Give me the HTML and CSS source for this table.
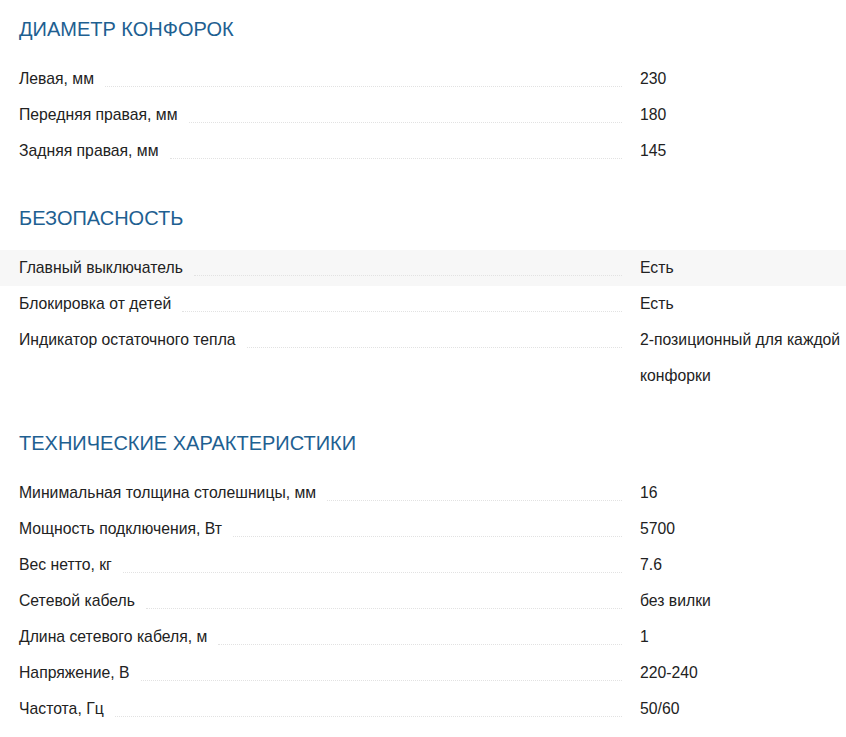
FILE: index.html
```html
<!DOCTYPE html>
<html lang="ru">
<head>
<meta charset="utf-8">
<title>Характеристики</title>
<link rel="stylesheet" href="styles.css">
</head>
<body>
<div class="specs">
  <section class="group">
    <h2 class="group-title">ДИАМЕТР КОНФОРОК</h2>
    <div class="row"><div class="label"><span>Левая, мм</span><i class="leader"></i></div><div class="value">230</div></div>
    <div class="row"><div class="label"><span>Передняя правая, мм</span><i class="leader"></i></div><div class="value">180</div></div>
    <div class="row"><div class="label"><span>Задняя правая, мм</span><i class="leader"></i></div><div class="value">145</div></div>
  </section>
  <section class="group">
    <h2 class="group-title">БЕЗОПАСНОСТЬ</h2>
    <div class="row row-hl"><div class="label"><span>Главный выключатель</span><i class="leader"></i></div><div class="value">Есть</div></div>
    <div class="row"><div class="label"><span>Блокировка от детей</span><i class="leader"></i></div><div class="value">Есть</div></div>
    <div class="row"><div class="label"><span>Индикатор остаточного тепла</span><i class="leader"></i></div><div class="value">2-позиционный для каждой конфорки</div></div>
  </section>
  <section class="group">
    <h2 class="group-title">ТЕХНИЧЕСКИЕ ХАРАКТЕРИСТИКИ</h2>
    <div class="row"><div class="label"><span>Минимальная толщина столешницы, мм</span><i class="leader"></i></div><div class="value">16</div></div>
    <div class="row"><div class="label"><span>Мощность подключения, Вт</span><i class="leader"></i></div><div class="value">5700</div></div>
    <div class="row"><div class="label"><span>Вес нетто, кг</span><i class="leader"></i></div><div class="value">7.6</div></div>
    <div class="row"><div class="label"><span>Сетевой кабель</span><i class="leader"></i></div><div class="value">без вилки</div></div>
    <div class="row"><div class="label"><span>Длина сетевого кабеля, м</span><i class="leader"></i></div><div class="value">1</div></div>
    <div class="row"><div class="label"><span>Напряжение, В</span><i class="leader"></i></div><div class="value">220-240</div></div>
    <div class="row"><div class="label"><span>Частота, Гц</span><i class="leader"></i></div><div class="value">50/60</div></div>
  </section>
</div>
</body>
</html>
```

FILE: styles.css
```css
html, body {
  margin: 0;
  padding: 0;
  background: #ffffff;
}

body {
  font-family: "Liberation Sans", Arial, sans-serif;
  color: #222222;
  font-size: 15.75px;
}

.specs {
  padding-top: 17px;
}

.group + .group {
  margin-top: 37px;
}

.group-title {
  margin: 0 0 20px 0;
  padding-left: 19px;
  font-size: 20px;
  line-height: 24px;
  font-weight: normal;
  color: #1e6091;
}

.row {
  display: grid;
  grid-template-columns: 1fr 206px;
  column-gap: 18px;
  padding-left: 19px;
  line-height: 36px;
}

.row-hl {
  background: #f7f7f7;
}

.label {
  display: flex;
  align-items: flex-start;
  min-width: 0;
}

.label span {
  white-space: nowrap;
}

.leader {
  flex: 1;
  height: 25px;
  margin-left: 11px;
  border-bottom: 1px dotted #e2e2e2;
}

.value {
  min-width: 0;
}
```
